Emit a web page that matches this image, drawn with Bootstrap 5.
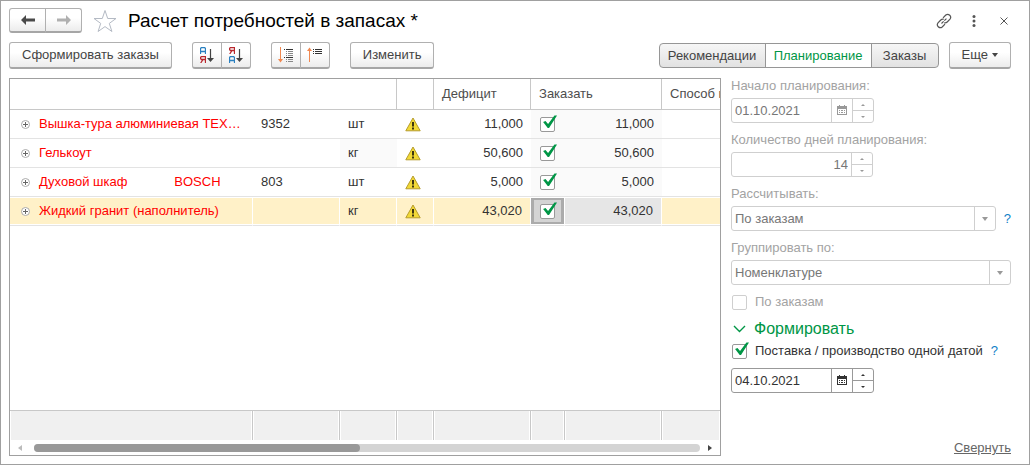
<!DOCTYPE html>
<html lang="ru">
<head>
<meta charset="utf-8">
<meta name="viewport" content="width=device-width, initial-scale=1">
<title>Расчет потребностей в запасах *</title>
<link href="https://cdn.jsdelivr.net/npm/bootstrap@5.3.0/dist/css/bootstrap.min.css" rel="stylesheet">
<style>
  :root { --line: #a0a0a0; --soft: #cfcfcf; --green: #009646; --blue: #1080c8; }
  body { font: 13px/16px "Liberation Sans", Arial, sans-serif; color: #333; background: #fff; }
  .window { border: 1px solid var(--line); padding: 7px 18px 8px 8px; gap: 9px; }
  .title-bar { margin-right: -8px; }
  h1 { font-size: 19px; line-height: 24px; color: #000; }
  svg { display: block; flex: none; }

  .toolbar { gap: 20px; }
  .toolbar-end { gap: 10px; }
  .tool { height: 27px; padding: 0 12px; font-size: 13px; line-height: 16px; color: #444; border: 1px solid #b0b0b0; border-bottom: 2px solid #a6a6a6; border-radius: 3px; background: linear-gradient(#fff 40%, #ececec); }
  .tool:hover { border-color: #999; color: #222; }
  .tool.icon { width: 30px; padding: 0; display: flex; align-items: center; justify-content: center; }
  .tool.nav-step { width: 37px; height: 25px; }
  .seg { height: 25px; padding: 0; width: 107px; font-size: 13px; line-height: 16px; color: #444; border: 1px solid #969696; border-radius: 4px; background: linear-gradient(#f6f6f6, #e2e2e2); }
  .seg.last { width: 68px; }
  .seg.active { color: var(--green); background: #fff; border-color: #969696; }
  .plain { border: 0; background: none; padding: 0; width: 30px; height: 24px; display: flex; align-items: center; justify-content: center; }

  .body-row { gap: 10px; }
  .grid-box { border: 1px solid var(--line); min-width: 0; }
  .data { table-layout: fixed; width: 100%; border-collapse: separate; border-spacing: 0; }
  .data th { height: 31px; padding: 0 8px 1px; font-weight: 400; color: #4d4d4d; border-bottom: 1px solid #c8c8c8; border-right: 1px solid #c8c8c8; white-space: nowrap; overflow: hidden; }
  .data td { height: 29px; padding: 0 8px; border-bottom: 1px solid #e3e3e3; white-space: pre; overflow: hidden; }
  .data td:first-child { padding-left: 11px; color: #f00; }
  .data .name { overflow: hidden; text-overflow: ellipsis; width: 204px; padding-left: 1px; }
  .data .num { text-align: right; }
  .data .edit { background: #fafafa; }
  .data .selected td { background: #fff1c8; border-right: 1px solid #fff; box-shadow: inset 0 1px #fff, inset 0 -1px #fff; }
  .data .selected .edit { background: #e6e6e6; }
  .data .selected .current { background: #d4d4d4; border-right: 1px solid #fff; box-shadow: inset 0 1px #fff, inset 0 -1px #fff, inset 0 0 0 3px #ababab; }
  .data th:last-child, .data .selected td:last-child { border-right: 0; }
  .totals { border-top: 1px solid #c8c8c8; }
  .totals td { height: 29px; padding: 0; border: 0; border-right: 1px solid #c8c8c8; background: #f0f0f0; box-shadow: inset 1px 0 #fff, inset -1px 0 #fff; }
  .totals td:last-child { border-right: 0; }
  .scroller { height: 15px; padding: 0 8px; }
  .track { height: 8px; border-radius: 4px; background: #d4d4d4; }
  .thumb { height: 8px; width: 49%; border-radius: 4px; background: #999; }

  .tick { appearance: none; position: relative; display: block; flex: none; width: 15px; height: 15px; margin: 0 0 0 1px; border: 1px solid #999; border-radius: 2px; background: #fff; }
  .tick:checked::before { content: ""; position: absolute; left: 0; top: -3px; width: 16px; height: 14px; background: var(--green); clip-path: polygon(13% 54%, 28% 46%, 44% 68%, 84% 7%, 100% 7%, 50% 96%, 42% 96%); }
  .tick:disabled { border-color: var(--soft); }

  .side { width: 280px; flex: none; gap: 9px; }
  .off { color: #a3a3a3; }
  .field { height: 25px; border: 1px solid #999; border-radius: 3px; background: #fff; color: #333; --edge: #999; }
  .field.locked { --edge: var(--soft); border-color: var(--soft); color: #999; }
  .field input, .field select { appearance: none; border: 0; padding: 0 3px; background: none; min-width: 0; color: #333; opacity: 1; outline: 0; }
  .field.locked input, .field.locked select { color: #777; }
  .field button, .caret { border: 0; border-left: 1px solid var(--edge); background: none; padding: 0; width: 21px; color: inherit; display: flex; align-items: center; justify-content: center; flex: none; }
  .spin { width: 21px; border-left: 1px solid var(--edge); flex: none; }
  .spin button { width: 20px; flex: 1 1 0; border-left: 0; }
  .spin button + button { border-top: 1px solid var(--edge); }
  .date { width: 143px; }
  .days { width: 142px; }
  .help { color: var(--blue); text-decoration: none; }
  .fold { border: 0; background: none; padding: 0 0 0 2px; color: var(--green); font-size: 16px; line-height: 20px; }
  .collapse-link { color: #666; }
</style>
</head>
<body>
<svg class="d-none" aria-hidden="true">
  <symbol id="plus" viewBox="0 0 9 9"><circle cx="4.500" cy="4.500" r="4" fill="#fff" stroke="#aaa"/><path d="M2 4.500h5M4.500 2v5" stroke="#666"/></symbol>
  <symbol id="warn" viewBox="0 0 16 15"><path d="M8 1 15.200 13.800H.8Z" fill="#f2d936" stroke="#b59c2c" stroke-linejoin="round"/><path d="M7 5h2v4.500H7zM7 10.500h2v2H7z" fill="#3c3510"/></symbol>
  <symbol id="cal" viewBox="0 0 10 11"><path d="M0 1h2V0h1v1h4V0h1v1h2v9H0z" fill="currentColor"/><path d="M1 4h8v5H1z" fill="#fff"/><path d="M2 5h1v1H2zM4 5h2v1H4zM7 5h1v1H7zM2 7h1v1H2zM4 7h2v1H4zM7 7h1v1H7z" fill="currentColor"/></symbol>
  <symbol id="up" viewBox="0 0 4 2"><path d="M0 2h4L2 0z" fill="currentColor"/></symbol>
  <symbol id="down" viewBox="0 0 4 2"><path d="M0 0h4L2 2z" fill="currentColor"/></symbol>
  <symbol id="drop" viewBox="0 0 6 4"><path d="M0 0h6L3 4z" fill="currentColor"/></symbol>
  <symbol id="letter-a" viewBox="0 0 6 7"><path d="M.5 7V1.500L1.500.5h3l1 1V7M.5 4.500h5" fill="none" stroke="#2a80c0" stroke-width="1.300"/></symbol>
  <symbol id="letter-ya" viewBox="0 0 6 7"><path d="M5.500 7V.5h-4l-1 1v1l1 1h4M3 3.500.7 7" fill="none" stroke="#b8282e" stroke-width="1.300"/></symbol>
  <symbol id="sort-arrow" viewBox="0 0 7 13"><path d="M3.500 0v10" stroke="#444" stroke-width="1.200"/><path d="M0 9h7l-3.500 4z" fill="#444"/></symbol>
</svg>
<main class="window min-vh-100 d-flex flex-column">
  <header class="title-bar d-flex align-items-center">
    <div class="btn-group">
      <button class="btn tool icon nav-step" aria-label="Назад"><svg width="14" height="10" viewBox="0 0 14 10"><path d="M0 5 5 0v3.500h9v3H5V10z" fill="#4a4a4a"/></svg></button>
      <button class="btn tool icon nav-step" aria-label="Вперед"><svg width="14" height="10" viewBox="0 0 14 10"><path d="M14 5 9 0v3.500H0v3h9V10z" fill="#b0b0b0"/></svg></button>
    </div>
    <svg class="ms-2 me-2" width="30" height="24" viewBox="0 0 30 24"><path d="M15 1.500 17.700 9.500H26L19.300 14.400 21.900 22.500 15 17.600 8.100 22.500 10.700 14.400 4 9.500H12.300Z" fill="#fff" stroke="#b4bac4"/></svg>
    <h1 class="m-0 flex-grow-1">Расчет потребностей в запасах *</h1>
    <button class="plain" aria-label="Ссылка"><svg width="16" height="16" viewBox="0 0 16 16" fill="none" stroke="#555" stroke-width="1.200"><path d="M7 4.800 9.800 2a3 3 0 0 1 4.200 4.200L11.200 9a3 3 0 0 1-3 .7M9 11.200 6.200 14A3 3 0 0 1 2 9.800L4.800 7a3 3 0 0 1 3-.7"/><path d="m5.500 10.500 5-5" stroke-dasharray="3 1"/></svg></button>
    <button class="plain" aria-label="Меню"><svg width="4" height="12" viewBox="0 0 4 12" fill="#555"><circle cx="2" cy="1.500" r="1.500"/><circle cx="2" cy="6" r="1.500"/><circle cx="2" cy="10.500" r="1.500"/></svg></button>
    <button class="plain" aria-label="Закрыть"><svg width="8" height="8" viewBox="0 0 8 8" stroke="#555"><path d="m.5.5 7 7M7.500.5l-7 7"/></svg></button>
  </header>

  <div class="toolbar d-flex align-items-center">
    <button class="btn tool">Сформировать заказы</button>
    <div class="btn-group">
      <button class="btn tool icon" aria-label="По возрастанию"><svg width="16" height="16"><use href="#letter-a" width="6" height="7" x="1"/><use href="#letter-ya" width="6" height="7" x="1" y="9"/><use href="#sort-arrow" width="7" height="13" x="8" y="2"/></svg></button>
      <button class="btn tool icon" aria-label="По убыванию"><svg width="16" height="16"><use href="#letter-ya" width="6" height="7" x="1"/><use href="#letter-a" width="6" height="7" x="1" y="9"/><use href="#sort-arrow" width="7" height="13" x="8" y="2"/></svg></button>
    </div>
    <div class="btn-group">
      <button class="btn tool icon" aria-label="Развернуть"><svg width="16" height="16" viewBox="0 0 16 16"><path d="M2.500 0v13" stroke="#f08850"/><path d="M0 12h5l-2.500 3.500z" fill="#f08850"/><path d="M6 2.500h1M8 2.500h7M6 10.500h1M8 10.500h7" stroke="#333"/><path d="M8 4.500h1M10 4.500h5M8 6.500h1M10 6.500h5M8 8.500h1M10 8.500h5M8 12.500h1M10 12.500h5M8 14.500h1M10 14.500h5" stroke="#888"/></svg></button>
      <button class="btn tool icon" aria-label="Свернуть группы"><svg width="16" height="16" viewBox="0 0 16 16"><path d="M2.500 3v12" stroke="#f08850"/><path d="M0 4h5L2.500.5z" fill="#f08850"/><path d="M6 2.500h1M8 2.500h7M6 4.500h1M8 4.500h7M6 6.500h1M8 6.500h7" stroke="#333"/></svg></button>
    </div>
    <button class="btn tool">Изменить</button>
    <div class="toolbar-end d-flex align-items-center ms-auto">
      <div class="btn-group">
        <button class="btn seg">Рекомендации</button>
        <button class="btn seg active">Планирование</button>
        <button class="btn seg last">Заказы</button>
      </div>
      <button class="btn tool d-flex align-items-center gap-1">Еще <svg width="6" height="4"><use href="#drop"/></svg></button>
    </div>
  </div>

  <div class="body-row d-flex flex-grow-1">
    <section class="grid-box flex-grow-1 d-flex flex-column">
      <table class="data">
        <colgroup><col style="width:243px"><col style="width:87px"><col style="width:57px"><col style="width:37px"><col style="width:97px"><col style="width:34px"><col style="width:97px"><col></colgroup>
        <thead><tr><th colspan="3"></th><th></th><th>Дефицит</th><th colspan="2">Заказать</th><th>Способ пополнения</th></tr></thead>
        <tbody>
          <tr><td><div class="d-flex align-items-center gap-2"><svg width="9" height="9"><use href="#plus"/></svg><span class="name">Вышка-тура алюминиевая ТЕХНО</span></div></td><td>9352</td><td>шт</td><td><svg width="16" height="15"><use href="#warn"/></svg></td><td class="num">11,000</td><td class="edit"><input class="tick" type="checkbox" checked aria-label="Заказать вышку-туру"></td><td class="num edit">11,000</td><td></td></tr>
          <tr><td><div class="d-flex align-items-center gap-2"><svg width="9" height="9"><use href="#plus"/></svg><span class="name">Гелькоут</span></div></td><td></td><td class="edit">кг</td><td><svg width="16" height="15"><use href="#warn"/></svg></td><td class="num">50,600</td><td class="edit"><input class="tick" type="checkbox" checked aria-label="Заказать гелькоут"></td><td class="num edit">50,600</td><td></td></tr>
          <tr><td><div class="d-flex align-items-center gap-2"><svg width="9" height="9"><use href="#plus"/></svg><span class="name">Духовой шкаф             BOSCH</span></div></td><td>803</td><td>шт</td><td><svg width="16" height="15"><use href="#warn"/></svg></td><td class="num">5,000</td><td class="edit"><input class="tick" type="checkbox" checked aria-label="Заказать духовой шкаф"></td><td class="num edit">5,000</td><td></td></tr>
          <tr class="selected"><td><div class="d-flex align-items-center gap-2"><svg width="9" height="9"><use href="#plus"/></svg><span class="name">Жидкий гранит (наполнитель)</span></div></td><td></td><td>кг</td><td><svg width="16" height="15"><use href="#warn"/></svg></td><td class="num">43,020</td><td class="edit current"><input class="tick" type="checkbox" checked aria-label="Заказать жидкий гранит"></td><td class="num edit">43,020</td><td></td></tr>
        </tbody>
      </table>
      <div class="mt-auto">
        <table class="data totals" aria-label="Итоги">
          <colgroup><col style="width:243px"><col style="width:87px"><col style="width:57px"><col style="width:37px"><col style="width:97px"><col style="width:34px"><col style="width:97px"><col></colgroup>
          <tbody><tr><td></td><td></td><td></td><td></td><td></td><td></td><td></td><td></td></tr></tbody>
        </table>
        <div class="scroller d-flex align-items-center gap-2">
          <svg width="4" height="6"><path d="M4 0v6L0 3z" fill="#bbb"/></svg>
          <div class="track flex-grow-1 ms-1"><div class="thumb"></div></div>
          <svg width="4" height="6"><path d="M0 0v6l4-3z" fill="#444"/></svg>
        </div>
      </div>
    </section>

    <aside class="side d-flex flex-column">
      <div>
        <label class="off d-block mb-1" for="start">Начало планирования:</label>
        <div class="field locked date d-flex"><input class="flex-grow-1" id="start" type="text" value="01.10.2021" disabled><button disabled aria-label="Календарь"><svg width="10" height="11"><use href="#cal"/></svg></button><div class="spin d-flex flex-column"><button disabled aria-label="Больше"><svg width="4" height="2"><use href="#up"/></svg></button><button disabled aria-label="Меньше"><svg width="4" height="2"><use href="#down"/></svg></button></div></div>
      </div>
      <div>
        <label class="off d-block mb-1" for="days">Количество дней планирования:</label>
        <div class="field locked days d-flex"><input class="flex-grow-1 text-end" id="days" type="text" value="14" disabled><div class="spin d-flex flex-column"><button disabled aria-label="Больше"><svg width="4" height="2"><use href="#up"/></svg></button><button disabled aria-label="Меньше"><svg width="4" height="2"><use href="#down"/></svg></button></div></div>
      </div>
      <div>
        <label class="off d-block mb-1" for="calc">Рассчитывать:</label>
        <div class="d-flex align-items-center"><div class="field locked d-flex flex-grow-1"><select class="flex-grow-1" id="calc" disabled><option>По заказам</option></select><span class="caret"><svg width="6" height="4"><use href="#drop"/></svg></span></div><a class="help ps-2" href="#">?</a></div>
      </div>
      <div>
        <label class="off d-block mb-1" for="group">Группировать по:</label>
        <div class="field locked d-flex"><select class="flex-grow-1" id="group" disabled><option>Номенклатуре</option></select><span class="caret"><svg width="6" height="4"><use href="#drop"/></svg></span></div>
      </div>
      <div class="d-flex align-items-center"><input class="tick me-1" type="checkbox" id="orders" disabled><label class="off ps-1" for="orders">По заказам</label></div>
      <div>
        <button class="fold d-flex align-items-center gap-2 mb-1"><svg width="13" height="8" viewBox="0 0 13 8"><path d="m1 1 5.500 5.500L12 1" fill="none" stroke="#009646" stroke-width="1.400"/></svg>Формировать</button>
        <div class="d-flex align-items-center"><input class="tick me-1" type="checkbox" id="single" checked><label class="ps-1" for="single">Поставка / производство одной датой</label><a class="help ps-2" href="#">?</a></div>
      </div>
      <div class="field date d-flex"><input class="flex-grow-1" type="text" value="04.10.2021" aria-label="Дата поставки"><button aria-label="Календарь"><svg width="10" height="11"><use href="#cal"/></svg></button><div class="spin d-flex flex-column"><button aria-label="Больше"><svg width="4" height="2"><use href="#up"/></svg></button><button aria-label="Меньше"><svg width="4" height="2"><use href="#down"/></svg></button></div></div>
      <a class="collapse-link mt-auto align-self-end" href="#">Свернуть</a>
    </aside>
  </div>
</main>
<script src="https://cdn.jsdelivr.net/npm/bootstrap@5.3.0/dist/js/bootstrap.bundle.min.js"></script>
</body>
</html>
